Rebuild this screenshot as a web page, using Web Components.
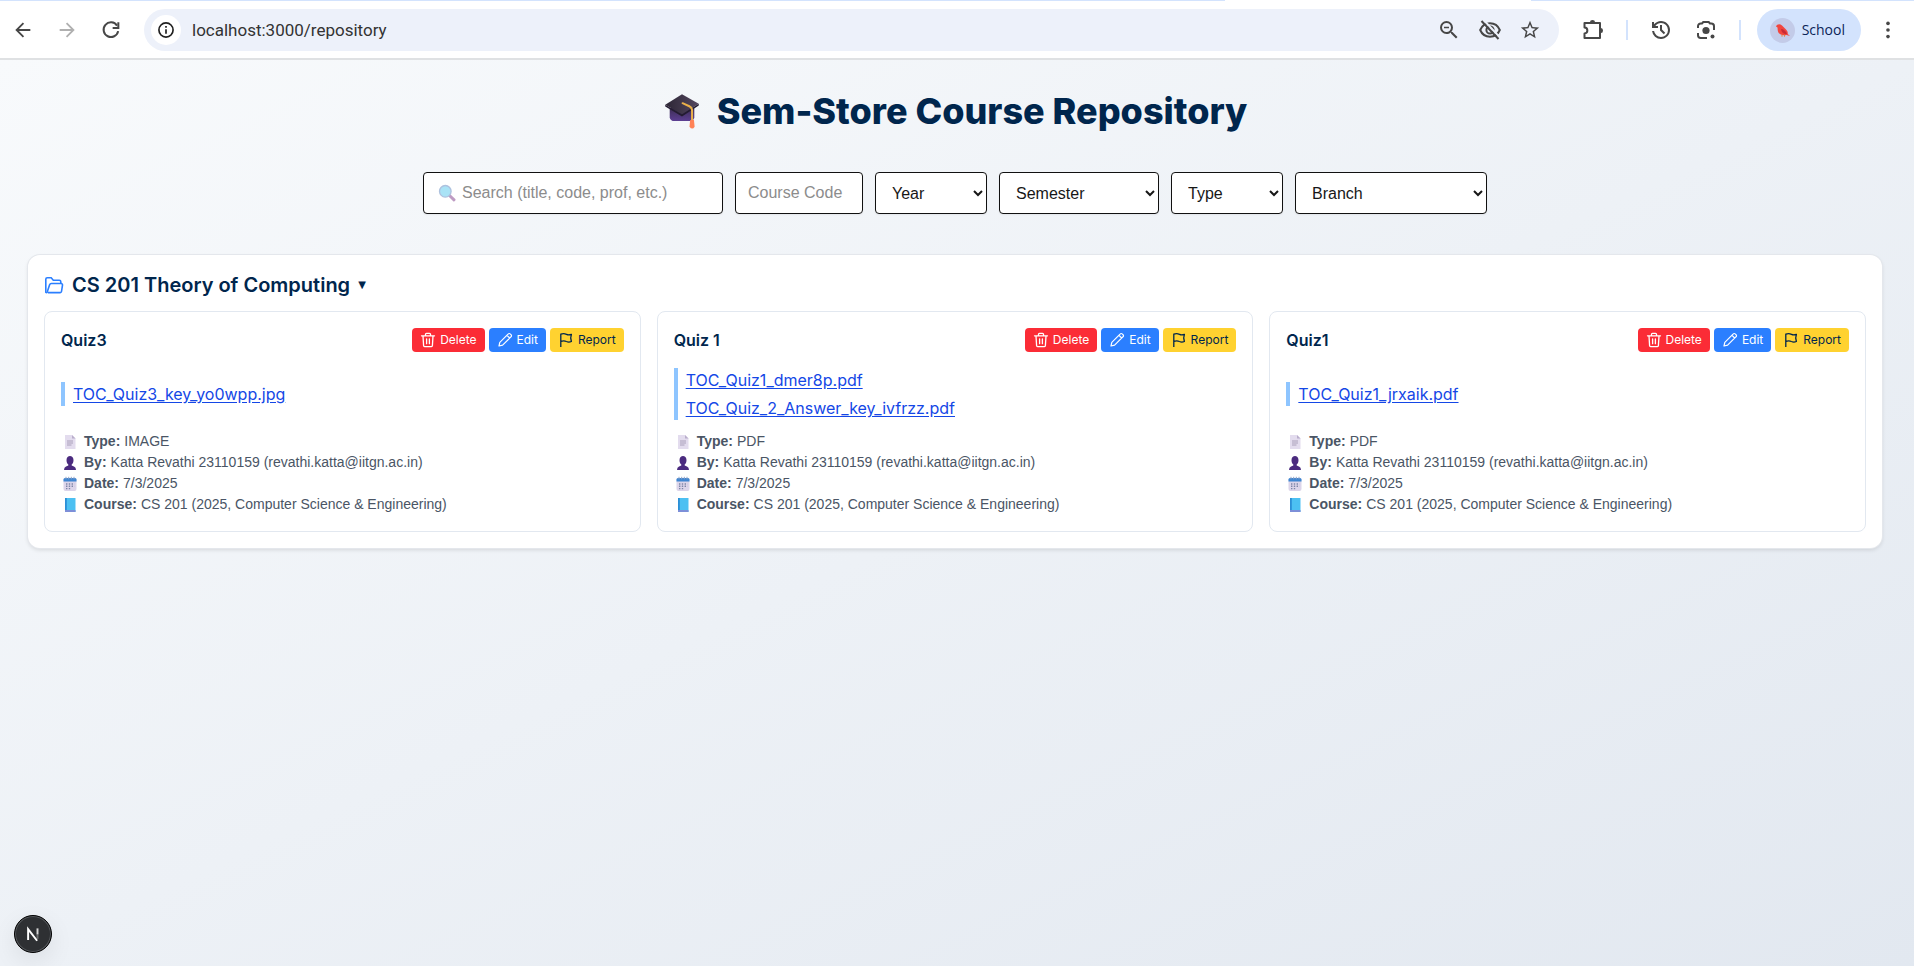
<!DOCTYPE html>
<html lang="en">
<head>
<meta charset="utf-8">
<title>Sem-Store Course Repository</title>
<style>
  html, body { margin: 0; min-height: 100vh; }
  body {
    display: flex; flex-direction: column;
    font-family: Inter, "Liberation Sans", sans-serif; font-size: 16px; line-height: 24px;
    --navy: #00264d; --body-font: "Liberation Sans", Arial, sans-serif;
  }
</style>
</head>
<body>
<browser-toolbar></browser-toolbar>
<repository-page>
  <course-section heading="CS 201 Theory of Computing">
    <resource-card name="Quiz3" type="IMAGE">
      <file-link slot="files" file="TOC_Quiz3_key_yo0wpp.jpg"></file-link>
    </resource-card>
    <resource-card name="Quiz 1" type="PDF">
      <file-link slot="files" file="TOC_Quiz1_dmer8p.pdf"></file-link>
      <file-link slot="files" file="TOC_Quiz_2_Answer_key_ivfrzz.pdf"></file-link>
    </resource-card>
    <resource-card name="Quiz1" type="PDF">
      <file-link slot="files" file="TOC_Quiz1_jrxaik.pdf"></file-link>
    </resource-card>
  </course-section>
</repository-page>
<dev-badge></dev-badge>

<script>
const line = (w, body, vb = 24) => `<svg viewBox="0 0 ${vb} ${vb}" fill="none" stroke="currentColor" stroke-width="${w}" aria-hidden="true">${body}</svg>`;
const solid = (body, vb = 24) => `<svg viewBox="0 0 ${vb} ${vb}" fill="currentColor" aria-hidden="true">${body}</svg>`;

const ICONS = {
  back: line(2, '<path d="M20 12H5M12.5 4.5 5 12l7.500 7.500"/>'),
  forward: line(2, '<path d="M4 12h15M11.500 4.500 19 12l-7.500 7.500"/>'),
  reload: line(2.2, '<path d="M18.600 7.200A8 8 0 1 0 19.800 13.200"/><path d="M20 3.500v6.200h-6.200"/>'),
  info: line(2, '<circle cx="12" cy="12" r="8.500"/><path d="M12 11v5.500M12 7.200v2"/>'),
  zoomout: solid('<path d="M15.500 14h-.79l-.28-.27A6.471 6.471 0 0 0 16 9.500 6.500 6.500 0 1 0 9.500 16c1.610 0 3.090-.59 4.230-1.570l.27.28v.79l5 4.990L20.490 19l-4.990-5zm-6 0C7.010 14 5 11.990 5 9.500S7.010 5 9.500 5 14 7.010 14 9.500 11.990 14 9.500 14zM7 8.700h5v1.600H7z"/>'),
  eyeoff: line(2, '<path d="M2.200 12C4 7.700 7.700 5.300 12 5.300s8 2.400 9.800 6.700c-1.800 4.300-5.500 6.700-9.800 6.700S4 16.300 2.200 12z"/><circle cx="12" cy="12" r="3.600"/><path d="M6 2.500 22 19.500" stroke="#edf1fa"/><path d="M3.500 3 20.500 21"/>'),
  star: solid('<path d="M22 9.240l-7.190-.62L12 2 9.190 8.630 2 9.240l5.460 4.730L5.820 21 12 17.270 18.180 21l-1.630-7.030L22 9.240zM12 15.400l-3.760 2.270 1-4.280-3.320-2.880 4.380-.38L12 6.100l1.710 4.040 4.380.38-3.320 2.880 1 4.280L12 15.400z"/>'),
  puzzle: line(2, '<path d="M3.500 5H19v15H3.500v-4.600c3.800-.2 3.800-5.600 0-5.800z" stroke-linejoin="round"/><path d="M9 4a2.500 2 0 0 1 5 0zM20 10a2 2.500 0 0 1 0 5z" fill="currentColor" stroke="none"/>'),
  history: solid('<path d="M12 21q-3.450 0-6.012-2.287T3.050 13H5.100q.35 2.600 2.313 4.300T12 19q2.925 0 4.963-2.037T19 12q0-2.925-2.037-4.962T12 5q-1.725 0-3.225.8T6.250 8H9v2H3V4h2v2.350q1.275-1.600 3.113-2.475T12 3q1.875 0 3.513.713t2.850 1.924 1.925 2.850T21 12q0 1.875-.712 3.513t-1.925 2.850-2.850 1.925T12 21m2.800-4.800L11 12.400V7h2v4.600l3.200 3.200z"/>'),
  lens: line(2, '<path d="M4 10V8.200A2.700 2.700 0 0 1 6.700 5.500H8L9.300 4h5.400L16 5.500h1.300A2.700 2.700 0 0 1 20 8.200V12M4 15v2.300A2.700 2.700 0 0 0 6.700 20H13"/><circle cx="12" cy="12.500" r="3.600" fill="currentColor" stroke="none"/><circle cx="18.500" cy="18.500" r="2" fill="currentColor" stroke="none"/>'),
  dots: solid('<circle cx="12" cy="4.800" r="2"/><circle cx="12" cy="12" r="2"/><circle cx="12" cy="19.200" r="2"/>'),
  bird: '<svg viewBox="0 0 25 25" aria-hidden="true"><circle cx="12.500" cy="12.500" r="12.500" fill="#c3cbe8"/><path d="M6 8.500C7 5.800 10 5.500 12 7.500l4 4c1.500 1.500 2 3 1.700 4.500l2.300 2-3.500-1c-4 1-8.500-.5-8.800-5L7.500 9.500z" fill="#f2453d"/><path d="M11 11c2.500 0 5 2 6 5-3 .5-5.500-1-6-5z" fill="#c92b34"/><path d="M12 16.500v2.200M14.500 16.700v2" stroke="#e8833a"/></svg>',
  folder: line(1.6, '<path d="M1.800 17.500V4.300A1.500 1.500 0 0 1 3.300 2.800h3.900l2.100 2.500h6a1.500 1.500 0 0 1 1.500 1.500v1.700"/><path d="M3.800 17.600h12.400a1.300 1.300 0 0 0 1.300-1.100l1-6.400a1.400 1.400 0 0 0-1.400-1.600H7.300a1.800 1.800 0 0 0-1.700 1.200L3.300 16.800c-.4.900-1.500 1.200-1.500.2" stroke-linejoin="round"/>', 20),
  trash: line(1.300, '<path d="M1.500 3.800h13M5.500 3.600V2.300a1 1 0 0 1 1-1h3a1 1 0 0 1 1 1v1.300M3 4l.6 9.600a1 1 0 0 0 1 1h6.800a1 1 0 0 0 1-1L13 4M6.600 6.800v4.900M9.400 6.800v4.900" stroke-linecap="round"/>', 16),
  pencil: line(1.200, '<path d="M2 14l.8-3.600 8.500-8.500a1.300 1.300 0 0 1 1.900 0l.9.9a1.300 1.300 0 0 1 0 1.900l-8.500 8.500zM10 3.300 12.700 6" stroke-linejoin="round"/>', 16),
  flag: line(1.300, '<path d="M2.800 15V2.200c2-.9 4-.7 5.700.1 1.700.8 3.300.6 4.900 0l-.7 3.700.7 3.500c-1.700.7-3.400.7-5 0-1.700-.8-3.600-.8-5.600 0" stroke-linejoin="round"/>', 16),
  cap: '<svg viewBox="1 1 34 34" aria-hidden="true"><defs><linearGradient id="b" x2="0" y2="1"><stop offset="0" stop-color="#3b2d52"/><stop offset="1" stop-color="#5d3f93"/></linearGradient><linearGradient id="t" x2="1"><stop offset="0" stop-color="#2c2635"/><stop offset="1" stop-color="#54475f"/></linearGradient></defs><path d="M7 15h22v9q-1 3-4 3H11q-3 0-4-3z" fill="url(#b)"/><path d="M18 3 33 11.500 18 21 3 12.500z" fill="url(#t)"/><path d="M18 21 3 12.500v1.500L18 23l15-10v-1.500z" fill="#241c31"/><path d="M18.500 11 25 14q2 1 2 3.500V28" fill="none" stroke="#eab04a" stroke-width="1.800" stroke-linecap="round"/><path d="M25.300 26h3.400l.6 6q-2 3.500-4.600 0z" fill="#ff8257"/></svg>',
  search: '<svg viewBox="0 0 18 18" aria-hidden="true"><path d="m11.500 11.500 4.500 4.300" stroke="#8a4b93" stroke-width="3" stroke-linecap="round"/><circle cx="7.300" cy="7.300" r="5.800" fill="#63cdf0" stroke="#6b8fc4" stroke-width="1.300"/></svg>',
  page: '<svg viewBox="0 0 16 16" aria-hidden="true"><path d="M3 1h7l3.500 3.500V15H3z" fill="#e3dcee"/><path d="M10 1v3.500h3.500z" fill="#b9aecb"/><path d="M5 7h6M5 9h6M5 11h4.500" stroke="#aaa0ba"/></svg>',
  person: '<svg viewBox="0 0 16 16" aria-hidden="true"><path d="M4.500 5c0-5.300 7-5.300 7 0 0 2-.6 3.600-1.800 4.500v1L12 11.500q2 .8 2 3.500H2q0-2.700 2-3.500l2.300-1v-1C5.100 8.600 4.500 7 4.500 5z" fill="#4b2b7f"/></svg>',
  calendar: '<svg viewBox="0 0 16 16" aria-hidden="true"><rect x="1.500" y="2" width="13" height="13" rx="2" fill="#dcd5ea"/><path d="M1.500 5.500V3.500Q1.500 2 3 2h10q1.500 0 1.500 1.500v2z" fill="#3f86d1"/><path d="M4 .800v2.500M6.700.800v2.500M9.300.800v2.500M12 .800v2.500" stroke="#8fa2c6"/><path d="M4 8h8.500M4 10.300h8.500M4 12.600h5.500" stroke="#7d86a8" stroke-width="1.400" stroke-dasharray="1.400 1.400"/></svg>',
  book: '<svg viewBox="0 0 16 16" aria-hidden="true"><path d="M3 1h10.500v14H3z" fill="#4cc0f2"/><path d="M3 1h1.800v12H3z" fill="#2b8fd6"/><path d="M3 13h10.500v2H3z" fill="#7d8fd8"/></svg>',
  next: line(2.6, '<path d="M17.500 32V17.500L29.500 33"/><path d="M30 16.500v8" opacity=".8"/><path d="M30 24.500v6" opacity=".3"/>', 48)
};

function define(tag, css, markup) {
  customElements.define(tag, class extends HTMLElement {
    connectedCallback() {
      if (this.shadowRoot) return;
      const get = key => this.getAttribute(key) || '';
      this.attachShadow({ mode: 'open' }).innerHTML = `<style>*{box-sizing:border-box}${css}</style>${markup(get)}`;
    }
  });
}

define('app-icon', `
  :host { display: inline-flex; flex: none; width: var(--size, 24px); height: var(--size, 24px); }
  svg { width: 100%; height: 100%; display: block; }
`, get => ICONS[get('name')]);

define('browser-toolbar', `
  :host {
    display: flex; align-items: center; padding: 9px 15px 7px 12px; gap: 22px;
    border-bottom: 2px solid #dfe1e3; color: #474747;
    background: linear-gradient(90deg, #d3e3fd 64%, #fff 64% 80%, #d3e3fd 80%) top / 100% 1px no-repeat #fff;
    font-family: "Open Sans", "Noto Sans", sans-serif;
  }
  button { border: 0; background: none; padding: 0; color: inherit; display: flex; font: inherit; }
  .small { --size: 22px; }
  .off { color: #b0b0b0; }
  .omnibox { flex: 1; display: flex; align-items: center; height: 42px; padding: 0 18px 0 7px; border-radius: 21px; background: #edf1fa; }
  .site { width: 30px; height: 30px; border-radius: 50%; background: #fff; align-items: center; justify-content: center; color: #1f1f1f; --size: 20px; }
  input { flex: 1; min-width: 0; border: 0; background: none; padding: 0 11px; font: 17px/24px Roboto, sans-serif; color: #333; }
  .actions { display: flex; gap: 17px; align-items: center; }
  .tools { display: flex; gap: 21px; align-items: center; }
  .rule { width: 2px; height: 20px; background: #d3e3fd; }
  .end { display: flex; gap: 16px; align-items: center; }
  .profile { height: 42px; align-items: center; gap: 7px; padding: 0 16px 0 13px; border-radius: 21px; background: #d3e3fd; color: #0b2457; font-size: 14px; --size: 25px; }
`, () => `
  <button class="small" aria-label="Back"><app-icon name="back"></app-icon></button>
  <button class="small off" aria-label="Forward"><app-icon name="forward"></app-icon></button>
  <button class="small" aria-label="Reload"><app-icon name="reload"></app-icon></button>
  <div class="omnibox">
    <button class="site" aria-label="Site information"><app-icon name="info"></app-icon></button>
    <input aria-label="Address" value="localhost:3000/repository">
    <div class="actions">
      <button aria-label="Zoom"><app-icon name="zoomout"></app-icon></button>
      <button aria-label="Tracking protection"><app-icon name="eyeoff"></app-icon></button>
      <button class="small" aria-label="Bookmark"><app-icon name="star"></app-icon></button>
    </div>
  </div>
  <div class="tools">
    <button aria-label="Extensions"><app-icon name="puzzle"></app-icon></button>
    <span class="rule"></span>
    <button aria-label="History"><app-icon name="history"></app-icon></button>
    <button aria-label="Lens"><app-icon name="lens"></app-icon></button>
    <div class="end">
      <span class="rule"></span>
      <button class="profile"><app-icon name="bird"></app-icon>School</button>
      <button class="small" aria-label="Menu"><app-icon name="dots"></app-icon></button>
    </div>
  </div>`);

define('repository-page', `
  :host { display: block; flex: 1; padding: 31px 32px 32px 28px; background: linear-gradient(to bottom right, #f8fafc, #e2e8f0); }
  h1 { display: flex; align-items: center; justify-content: center; gap: 16px; margin: 0 0 41px; font-size: 36px; line-height: 40px; font-weight: 800; color: var(--navy); --size: 38px; }
  filter-bar { margin-bottom: 41px; }
`, () => `
  <h1><app-icon name="cap"></app-icon>Sem-Store Course Repository</h1>
  <filter-bar></filter-bar>
  <slot></slot>`);

define('filter-bar', `
  :host { display: flex; flex-wrap: wrap; justify-content: center; gap: 12px; font-family: var(--body-font); }
  input, select { height: 42px; border: 1px solid #111; border-radius: 4px; background-color: #fff; color: #171717; padding: 0 12px; font: inherit; font-size: 16px; box-shadow: 0 1px 2px rgba(0,0,0,.06); }
  input { width: 128px; }
  input::placeholder { color: #8c8c8c; opacity: 1; }
  .search { position: relative; --size: 18px; }
  .search app-icon { position: absolute; left: 15px; top: 12px; opacity: .55; }
  .search input { width: 300px; padding-left: 38px; }
  .narrow { width: 112px; }
  .mid { width: 160px; }
  .wide { width: 192px; }
`, () => `
  <label class="search"><app-icon name="search"></app-icon><input placeholder="Search (title, code, prof, etc.)" aria-label="Search"></label>
  <input placeholder="Course Code" aria-label="Course code">
  <select class="narrow" aria-label="Year"><option>Year</option></select>
  <select class="mid" aria-label="Semester"><option>Semester</option></select>
  <select class="narrow" aria-label="Type"><option>Type</option></select>
  <select class="wide" aria-label="Branch"><option>Branch</option></select>`);

define('course-section', `
  :host { display: block; padding: 16px; border-radius: 12px; background: #fff; box-shadow: 0 0 0 1px #e4e7ec, 0 2px 4px rgba(0,0,0,.12); }
  h2 { margin: 0 0 12px; font-size: 20px; line-height: 28px; font-weight: 600; }
  button { display: flex; align-items: center; border: 0; padding: 0; background: none; font: inherit; color: var(--navy); --size: 20px; }
  app-icon { color: #2b7fff; margin-right: 8px; }
  .arrow { font: 10px/28px "DejaVu Sans", sans-serif; margin-left: 8px; }
  .cards { display: grid; grid-template-columns: repeat(3, 1fr); gap: 16px; }
`, get => `
  <h2><button><app-icon name="folder"></app-icon>${get('heading')}<span class="arrow">▼</span></button></h2>
  <div class="cards"><slot></slot></div>`);

define('file-link', `
  :host { display: block; line-height: 24px; }
  a { color: #1447e6; text-decoration: underline; text-underline-offset: 2px; }
`, get => `<a href="#${get('file')}">${get('file')}</a>`);

define('resource-card', `
  :host { display: block; padding: 16px; border: 1px solid #e2e8f0; border-radius: 8px; background: #fff; }
  header { display: flex; align-items: center; justify-content: space-between; }
  h3 { margin: 0; font-size: 16px; line-height: 24px; font-weight: 600; color: var(--navy); }
  .buttons { display: flex; gap: 4px; --size: 16px; }
  button { display: flex; align-items: center; gap: 4px; height: 24px; padding: 0 8px; border: 0; border-radius: 4px; font: 12px/16px Inter, sans-serif; color: #fff; }
  .delete { background: #fb2c36; }
  .edit { background: #2b7fff; }
  .report { background: #ffd230; color: var(--navy); }
  .files { display: flex; align-items: center; min-height: 52px; margin: 16px 0 11px; }
  .list { display: grid; gap: 4px; padding-left: 8px; border-left: 4px solid #8ec5ff; }
  .meta { font: 14px/21px var(--body-font); color: #4a5565; padding-left: 1px; --size: 16px; }
  .meta div { display: flex; align-items: center; }
  .meta app-icon { margin-right: 6px; }
  b { margin-right: 4px; }
`, get => `
  <header>
    <h3>${get('name')}</h3>
    <div class="buttons">
      <button class="delete"><app-icon name="trash"></app-icon>Delete</button>
      <button class="edit"><app-icon name="pencil"></app-icon>Edit</button>
      <button class="report"><app-icon name="flag"></app-icon>Report</button>
    </div>
  </header>
  <div class="files"><div class="list"><slot name="files"></slot></div></div>
  <div class="meta">
    <div><app-icon name="page"></app-icon><b>Type:</b>${get('type')}</div>
    <div><app-icon name="person"></app-icon><b>By:</b>Katta Revathi 23110159 (revathi.katta@iitgn.ac.in)</div>
    <div><app-icon name="calendar"></app-icon><b>Date:</b>7/3/2025</div>
    <div><app-icon name="book"></app-icon><b>Course:</b>CS 201 (2025, Computer Science &amp; Engineering)</div>
  </div>`);

define('dev-badge', `
  :host { position: fixed; left: 14px; bottom: 13px; }
  button { width: 38px; height: 38px; padding: 0; border: 1px solid #000; border-radius: 50%; background: #2e3033; color: #fff; box-shadow: inset 0 0 0 1px #55585c, 0 8px 24px rgba(0,0,0,.08); display: flex; --size: 36px; }
`, () => `<button aria-label="Developer tools"><app-icon name="next"></app-icon></button>`);
</script>
</body>
</html>
